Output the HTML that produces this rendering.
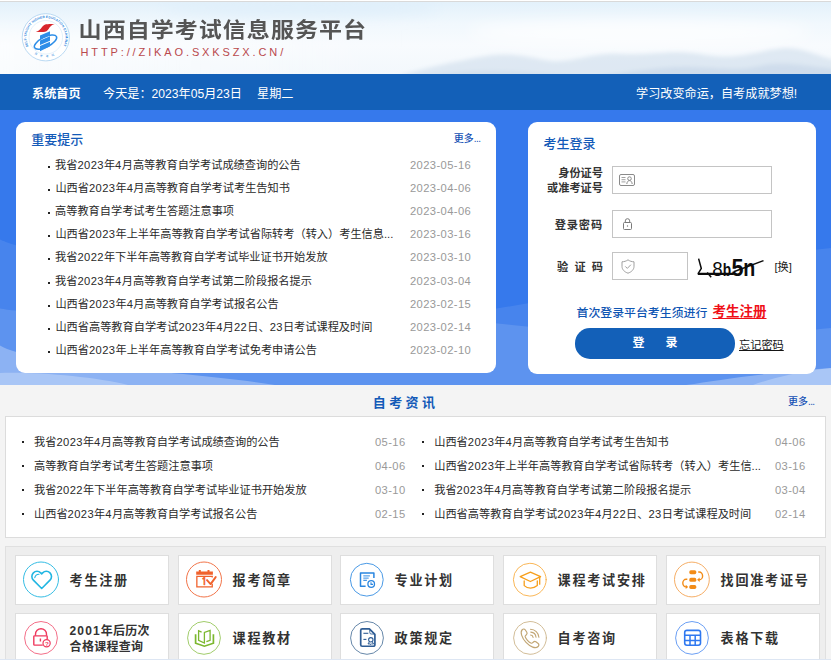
<!DOCTYPE html>
<html lang="zh-CN">
<head>
<meta charset="utf-8">
<title>山西自学考试信息服务平台</title>
<style>
*{margin:0;padding:0;box-sizing:border-box}
html,body{width:831px;height:660px;overflow:hidden;background:#f4f4f4}
body{position:relative;font-family:"Liberation Sans","Noto Sans CJK SC",sans-serif;color:#2a2a2a;font-size:11.2px}
.abs{position:absolute}
a{color:inherit;text-decoration:none}
#topline{left:0;top:0;width:831px;height:2px;background:linear-gradient(#fff 0,#fff 1px,#d9d9d9 1px,#d9d9d9 2px)}
#header{left:0;top:2px;width:831px;height:72px;overflow:hidden;background:#f7fbfe}
#title{left:78.6px;top:12.6px;font-size:23px;font-weight:bold;color:#555;letter-spacing:1.04px;line-height:30px;white-space:nowrap;transform:scaleY(.91);transform-origin:0 50%}
#url{left:80.5px;top:42.9px;font-size:11px;color:#b9494d;letter-spacing:2.88px;line-height:14px;white-space:nowrap}
#nav{left:0;top:74px;width:831px;height:36px;background:#1360b8;color:#fff;font-size:12.15px;line-height:35px;white-space:nowrap}
#nav span{position:absolute;top:2.5px}
#main{left:0;top:110px;width:831px;height:275px;background:#3679ec;overflow:hidden}
.card{background:#fff;border-radius:9px}
#notice{left:16px;top:122px;width:480px;height:251px}
#login{left:528px;top:122px;width:288px;height:252px}
.h{color:#135ab8;font-size:13px;font-weight:500;line-height:16px;white-space:nowrap}
.more{color:#1450b4;font-size:10px;line-height:12px;white-space:nowrap;font-weight:500}
.more u{text-decoration:none;letter-spacing:-.6px}
.li{position:absolute;left:0;width:100%;height:16px;line-height:16px;white-space:nowrap}
.li i{position:absolute;width:2px;height:2px;background:#222;top:9px}
.li span{position:absolute;top:0}
.li .d{color:#999}
.lab{left:0;width:75px;text-align:right;font-weight:bold;font-size:11.2px;color:#333;white-space:nowrap}
.inp{border:1px solid #c4c4c4;background:#fff}
#news{left:5px;top:416px;width:821px;height:122px;background:#fff;border:1px solid #dcdcdc}
#links{left:5px;top:546px;width:821px;height:120px;background:#eee;border:1px solid #e0e0e0}
.tile{position:absolute;width:154px;height:50px;background:#fff;border:1px solid #dedede}
.tile .ic{position:absolute;left:4.8px;top:3.3px}
.tile .tt{position:absolute;left:53.6px;top:16.3px;line-height:18px;font-size:13.1px;letter-spacing:1.75px;font-weight:bold;color:#333;white-space:nowrap}
.tile .tt.two{top:10.2px;line-height:15.400px;font-size:12px;letter-spacing:.300px}
.tile .tt b{letter-spacing:1.1px}
.li b{font-weight:normal;letter-spacing:.400px}
.li .d{letter-spacing:.400px}

</style>
</head>
<body>
<div id="topline" class="abs"></div>
<div id="header" class="abs">
  <svg class="abs" style="left:0;top:0" width="831" height="72" viewBox="0 0 831 72"><defs>
      <linearGradient id="sky" x1="0" y1="0" x2="0" y2="1"><stop offset="0" stop-color="#e3f1fb"/><stop offset=".3" stop-color="#f1f8fd"/><stop offset=".6" stop-color="#f8fbfe"/><stop offset="1" stop-color="#f3f8fc"/></linearGradient>
      <linearGradient id="fadeL" x1="0" y1="0" x2="1" y2="0"><stop offset="0" stop-color="#fff" stop-opacity=".55"/><stop offset=".5" stop-color="#fff" stop-opacity=".25"/><stop offset="1" stop-color="#fff" stop-opacity="0"/></linearGradient>
      <filter id="bl" x="-5%" y="-40%" width="110%" height="180%"><feGaussianBlur stdDeviation="2"/></filter>
      <filter id="bl2" x="-10%" y="-60%" width="120%" height="220%"><feGaussianBlur stdDeviation="7"/></filter>
    </defs>
    <rect width="831" height="72" fill="url(#sky)"/>
    <g filter="url(#bl2)"><rect x="-20" y="28" width="420" height="60" fill="url(#fadeL)"/><ellipse cx="640" cy="30" rx="170" ry="12" fill="#fff" fill-opacity=".7"/><ellipse cx="300" cy="6" rx="140" ry="8" fill="#ddeefa" fill-opacity=".8"/></g>
    <g filter="url(#bl)">
      <path d="M400 74C430 64 455 60 480 55S520 53 545 58 590 50 620 52 670 47 700 52 740 54 770 48 810 52 835 58V80H400z" fill="#d6e2ef" fill-opacity=".72"/>
      <path d="M600 74C630 70 660 64 690 65S740 69 760 64 800 63 835 67V80H600z" fill="#c6d6e8" fill-opacity=".6"/>
      <path d="M410 76C440 71 470 68 500 69S560 73 590 76z" fill="#cddbea" fill-opacity=".6"/>
    </g>
</svg>
  <svg class="abs" style="left:15px;top:6px" width="60" height="60" viewBox="0 0 60 60">
    <defs>
      <path id="arcT" d="M13.600 38.500A19.500 19.500 0 1 1 48.500 38"/>
      <path id="arcB" d="M19.500 45.800A19.800 19.800 0 0 0 42.300 45.600"/>
    </defs>
    <circle cx="30.800" cy="29.300" r="23.600" fill="#fff" stroke="#a9d0f0" stroke-width=".800"/>
    <circle cx="30.800" cy="29.300" r="16.800" fill="none" stroke="#c9e2f6" stroke-width=".500"/>
    <text font-family="Liberation Sans, sans-serif" font-size="3.300" font-weight="bold" fill="#2f86dc" letter-spacing=".100"><textPath href="#arcT">SELF-TAUGHT HIGHER EDUCATION EXAMINATIONS</textPath></text>
    <text font-family="Liberation Sans, Noto Sans CJK SC, sans-serif" font-size="2.800" fill="#2f86dc" letter-spacing="3.200"><textPath href="#arcB">自学考试</textPath></text>
    <path d="M20.800 23.900c3.500-.600 5.200-3.600 7.200-5.800 1.600-1.800 3.200-1.900 11.600-2-3.200.700-4.500 2.800-6 4.800-1.400 1.900-2.600 3-5.300 3z" fill="#d8262c"/>
    <ellipse cx="30.500" cy="34.100" rx="12.300" ry="5" transform="rotate(-27 30.500 34.100)" fill="none" stroke="#2e8ee8" stroke-width="1.500"/>
    <path d="M25 27.400l10-4.200v4.100l-10 4.200zM25 32.500l10-4.200v4.400l-10 4.200zM25 37.900l10-4.200v4.500l-10 5z" fill="#2e8ee8"/>
  </svg>

  <div id="title" class="abs">山西自学考试信息服务平台</div>
  <div id="url" class="abs">HTTP://ZIKAO.SXKSZX.CN/</div>
</div>
<div id="nav" class="abs">
  <span style="left:32px;font-weight:bold">系统首页</span>
  <span style="left:103px">今天是：2023年05月23日</span>
  <span style="left:257px">星期二</span>
  <span style="left:636px">学习改变命运，自考成就梦想!</span>
</div>
<div id="main" class="abs">
  <svg class="abs" style="left:0;top:-1px" width="831" height="276" viewBox="0 0 831 276"><path d="M0 130.500C22 142 300 215 420 208S720 150 831 139V276H0z" fill="#fff" fill-opacity=".085"/>
    <path d="M0 199.500C60 211 330 196 512 216S760 226 831 219V276H0z" fill="#fff" fill-opacity=".120"/>
    <path d="M0 236.500C34 257 190 262 275 276H0z" fill="#fff" fill-opacity=".290"/>
    <path d="M686 276C720 271 760 264 831 259V276z" fill="#fff" fill-opacity=".290"/>
    <path d="M0 264C40 263 95 268 128 276H0z" fill="#fff" fill-opacity=".260"/>
    <path d="M753 276C770 270 795 263 831 259V276z" fill="#fff" fill-opacity=".260"/></svg>
</div>
<div id="notice" class="abs card">
  <div class="abs h" style="left:15.2px;top:10.3px">重要提示</div>
  <div class="abs more" style="left:437.8px;top:10.8px">更多<u>...</u></div>
  <div class="li" style="top:35.0px"><i style="left:32px"></i><span style="left:39px">我省<b>2023</b>年<b>4</b>月高等教育自学考试成绩查询的公告</span><span class="d" style="left:394px">2023-05-16</span></div>
  <div class="li" style="top:58.1px"><i style="left:32px"></i><span style="left:39.4px">山西省<b>2023</b>年<b>4</b>月高等教育自学考试考生告知书</span><span class="d" style="left:394px">2023-04-06</span></div>
  <div class="li" style="top:81.2px"><i style="left:32px"></i><span style="left:39px">高等教育自学考试考生答题注意事项</span><span class="d" style="left:394px">2023-04-06</span></div>
  <div class="li" style="top:104.3px"><i style="left:32px"></i><span style="left:39.4px">山西省<b>2023</b>年上半年高等教育自学考试省际转考（转入）考生信息...</span><span class="d" style="left:394px">2023-03-16</span></div>
  <div class="li" style="top:127.4px"><i style="left:32px"></i><span style="left:39px">我省<b>2022</b>年下半年高等教育自学考试毕业证书开始发放</span><span class="d" style="left:394px">2023-03-10</span></div>
  <div class="li" style="top:150.5px"><i style="left:32px"></i><span style="left:39px">我省<b>2023</b>年<b>4</b>月高等教育自学考试第二阶段报名提示</span><span class="d" style="left:394px">2023-03-04</span></div>
  <div class="li" style="top:173.6px"><i style="left:32px"></i><span style="left:39.4px">山西省<b>2023</b>年<b>4</b>月高等教育自学考试报名公告</span><span class="d" style="left:394px">2023-02-15</span></div>
  <div class="li" style="top:196.7px"><i style="left:32px"></i><span style="left:39.4px">山西省高等教育自学考试<b>2023</b>年<b>4</b>月<b>22</b>日、<b>23</b>日考试课程及时间</span><span class="d" style="left:394px">2023-02-14</span></div>
  <div class="li" style="top:219.8px"><i style="left:32px"></i><span style="left:39.4px">山西省<b>2023</b>年上半年高等教育自学考试免考申请公告</span><span class="d" style="left:394px">2023-02-10</span></div>
</div>
<div id="login" class="abs card">
  <div class="abs h" style="left:15.5px;top:14.3px">考生登录</div>
  <div class="abs lab" style="top:43.7px;line-height:15.8px">身份证号<br>或准考证号</div>
  <div class="abs inp" style="left:84px;top:44px;width:160px;height:28px"></div>
  <svg class="abs" style="left:91px;top:52px" width="16" height="12" viewBox="0 0 16 12" fill="none" stroke="#8a8a8a" stroke-width="1"><rect x=".5" y=".5" width="15" height="11" rx="1.5"/><path d="M2.5 3.5h4M2.5 5.7h4M2.5 7.9h4" stroke-width=".8"/><circle cx="10.5" cy="4.6" r="1.8"/><path d="M7.8 10c.3-2.4 1.4-3.4 2.7-3.4s2.4 1 2.7 3.4"/></svg>
  <div class="abs lab" style="top:94.5px;line-height:16px;letter-spacing:.9px">登录密码</div>
  <div class="abs inp" style="left:84px;top:88px;width:160px;height:28px"></div>
  <svg class="abs" style="left:95px;top:96px" width="9" height="12" viewBox="0 0 9 12" fill="none" stroke="#7a7a7a" stroke-width="1"><rect x=".5" y="4.5" width="8" height="7" rx="1"/><path d="M2.3 4.5V2.9a2.2 2.2 0 0 1 4.4 0v1.6"/><circle cx="4.5" cy="8" r=".7" fill="#7a7a7a" stroke="none"/></svg>
  <div class="abs lab" style="top:137px;line-height:16px;word-spacing:0">验<span style="display:inline-block;width:6.2px"></span>证<span style="display:inline-block;width:6.2px"></span>码</div>
  <div class="abs inp" style="left:84px;top:130px;width:76px;height:28px"></div>
  <svg class="abs" style="left:92.5px;top:137px" width="14" height="15" viewBox="0 0 14 15" fill="none" stroke="#a0a0a0" stroke-width="1"><path d="M7 .8C5.2 2.2 3.2 2.7 1 2.8v4.6c0 3.300 2.600 5.600 6 6.800 3.400-1.200 6-3.500 6-6.800V2.800C10.800 2.700 8.800 2.200 7 .8z"/><path d="M4.300 7.400l2 2 3.600-3.700"/></svg>
  <svg class="abs" style="left:168px;top:132px" width="72" height="28" viewBox="0 0 72 28" font-family="Liberation Sans, sans-serif" fill="#0c0c0c">
    <text x="16.300" y="21.800" font-size="20" textLength="10.400" lengthAdjust="spacingAndGlyphs">8</text>
    <text x="26.800" y="21.800" font-size="18" font-weight="bold" textLength="8.400" lengthAdjust="spacingAndGlyphs">b</text>
    <text x="35.400" y="21.800" font-size="24" font-weight="bold" textLength="12" lengthAdjust="spacingAndGlyphs">5</text>
    <text x="47.300" y="21.800" font-size="23" font-weight="bold" textLength="12" lengthAdjust="spacingAndGlyphs">n</text>
    <path d="M2.600 4.600l2.700 9.900-3.300 5.300M37.700 17.800l29.800-11.200M11.200 18.500l4 4.700" fill="none" stroke="#0c0c0c" stroke-width="1.500"/>
    <path d="M1.800 19.900h36" fill="none" stroke="#0c0c0c" stroke-width="2.200"/>
  </svg>
  <div class="abs" style="left:246.500px;top:137px;line-height:16px;font-size:11.200px;color:#222">[换]</div>
  <div class="abs" style="left:48.500px;top:183px;line-height:16px;font-size:11.900px;color:#0f55b3;white-space:nowrap;font-weight:500">首次登录平台考生须进行</div>
  <div class="abs" style="left:184.500px;top:181px;line-height:18px;font-size:13.500px;color:#f00f17;white-space:nowrap;font-weight:bold;text-decoration:underline;text-underline-offset:2px">考生注册</div>
  <div class="abs" style="left:47px;top:206.300px;width:160px;height:30.400px;border-radius:15px;background:#1360b8;color:#fff;font-weight:bold;font-size:12px;line-height:30px;text-align:center">登<span style="display:inline-block;width:21px"></span>录</div>
  <div class="abs" style="left:211px;top:214.500px;line-height:16px;font-size:11.200px;color:#151515;white-space:nowrap;text-decoration:underline;text-underline-offset:.8px">忘记密码</div>

</div>
<div class="abs h" style="left:372.8px;top:394.8px;letter-spacing:3.4px;font-weight:bold">自考资讯</div>
<div class="abs more" style="left:788px;top:395.8px">更多<u>...</u></div>
<div id="news" class="abs">
<div class="li" style="top:17px"><i style="left:16px;top:6.7px"></i><span style="left:28px">我省<b>2023</b>年<b>4</b>月高等教育自学考试成绩查询的公告</span><span class="d" style="left:369px">05-16</span></div>
<div class="li" style="top:17px"><i style="left:416px;top:6.7px"></i><span style="left:428.2px">山西省<b>2023</b>年<b>4</b>月高等教育自学考试考生告知书</span><span class="d" style="left:769px">04-06</span></div>
<div class="li" style="top:41px"><i style="left:16px;top:6.7px"></i><span style="left:28px">高等教育自学考试考生答题注意事项</span><span class="d" style="left:369px">04-06</span></div>
<div class="li" style="top:41px"><i style="left:416px;top:6.7px"></i><span style="left:428.2px">山西省<b>2023</b>年上半年高等教育自学考试省际转考（转入）考生信...</span><span class="d" style="left:769px">03-16</span></div>
<div class="li" style="top:65px"><i style="left:16px;top:6.7px"></i><span style="left:28px">我省<b>2022</b>年下半年高等教育自学考试毕业证书开始发放</span><span class="d" style="left:369px">03-10</span></div>
<div class="li" style="top:65px"><i style="left:416px;top:6.7px"></i><span style="left:428.2px">我省<b>2023</b>年<b>4</b>月高等教育自学考试第二阶段报名提示</span><span class="d" style="left:769px">03-04</span></div>
<div class="li" style="top:89px"><i style="left:16px;top:6.7px"></i><span style="left:28px">山西省<b>2023</b>年<b>4</b>月高等教育自学考试报名公告</span><span class="d" style="left:369px">02-15</span></div>
<div class="li" style="top:89px"><i style="left:416px;top:6.7px"></i><span style="left:428.2px">山西省高等教育自学考试<b>2023</b>年<b>4</b>月<b>22</b>日、<b>23</b>日考试课程及时间</span><span class="d" style="left:769px">02-14</span></div>
</div>
<div id="links" class="abs">
<div class="tile" style="left:9px;top:8px"><svg class="ic" width="40" height="40" viewBox="0 0 40 40" fill="none" stroke="#22b6e2" stroke-linecap="round" stroke-linejoin="round"><circle cx="20" cy="20.500" r="17.500" stroke-width="1" stroke="#35bde4"/><path transform="translate(9.400 9.500) scale(.94)" d="M20.840 4.610a5.500 5.500 0 0 0-7.780 0L12 5.670l-1.060-1.060a5.500 5.500 0 0 0-7.780 7.780l1.060 1.060L12 21.230l7.780-7.780 1.060-1.060a5.500 5.500 0 0 0 0-7.780z" stroke-width="1.700"/><path d="M13.800 18.700a4.300 4.300 0 0 1 4.200-3.500" stroke-width="1.100"/></svg><div class="tt">考生注册</div></div>
<div class="tile" style="left:172px;top:8px"><svg class="ic" width="40" height="40" viewBox="0 0 40 40" fill="none" stroke="#f0622d"><circle cx="20" cy="20.500" r="17.500" stroke-width="1" stroke="#f2754a"/><path d="M12.200 12.400h2.600v-1.400h2v1.400h6.700v-1.400h2v1.400h3.400v3.300H12.200z" fill="#f0622d" stroke="none"/><path d="M28.250 24.800v3.100H12.850V17.400h15.400v1" stroke-width="1.300"/><text x="17.200" y="25.600" font-family="NanumGothic, sans-serif" font-size="9.800" font-weight="bold" fill="#f0622d" stroke="#f0622d" stroke-width=".5">1</text><path d="M23 21.100l3.600 4 5.100-7" stroke-width="1.900" stroke-linecap="round" stroke-linejoin="round"/></svg><div class="tt">报考简章</div></div>
<div class="tile" style="left:334px;top:8px"><svg class="ic" style="left:5.8px" width="40" height="40" viewBox="0 0 40 40" fill="none" stroke="#2a86e0"><circle cx="19.800" cy="20.700" r="16.400" stroke-width="1" stroke="#4a9ae6"/><path d="M18.600 27.300h-5.100V13.900h13.400v5.200" stroke-width="1.500" stroke-linejoin="round"/><path d="M16.300 16.800h6.600M16.300 19.100h5.400" stroke-width="1.300" stroke="#5aa3ea"/><path d="M16.300 21.300h3.600" stroke-width="1.100"/><circle cx="24.200" cy="25" r="3.300" stroke-width="1.300"/><path d="M24 23.300v2.100h2" stroke-width="1.100"/></svg><div class="tt">专业计划</div></div>
<div class="tile" style="left:497px;top:8px"><svg class="ic" style="left:5.8px" width="40" height="40" viewBox="0 0 40 40" fill="none" stroke="#f79f1c" stroke-linejoin="round" stroke-linecap="round"><circle cx="19.800" cy="20.700" r="16.400" stroke-width=".900" stroke="#f8ae44"/><path d="M10.200 17.600l10.200-4.400 10.200 4.400-10.200 4.900z" stroke-width="1.300"/><path d="M29.700 18.200v7" stroke-width="1.300"/><path d="M14.200 22v4.600c1.800 1.700 4 2.500 6.300 2.500s4.800-.8 6.800-2.500V22" stroke-width="1.300"/></svg><div class="tt">课程考试安排</div></div>
<div class="tile" style="left:660px;top:8px"><svg class="ic" style="left:5.8px" width="40" height="40" viewBox="0 0 40 40" fill="none" stroke="#f28c18"><circle cx="18.900" cy="20.500" r="17.400" stroke-width=".900" stroke="#f4a453"/><g fill="#f28c18" stroke="none"><rect x="16.300" y="11.200" width="7" height="4" rx="1.600"/><rect x="16.300" y="18.800" width="7" height="4" rx="1.600"/><rect x="16.300" y="25.900" width="7" height="4" rx="1.600"/><path d="M24.100 20.800l2.500-2.200v4.400z"/><path d="M15.200 27.900l-2.500-2.200v4.400z"/></g><path d="M25.200 13h1a3.400 3.900 0 0 1 0 7.800h-.4" stroke-width="1.400"/><path d="M14.300 20.300h-1.200a3.300 3.800 0 0 0 0 7.600h.6" stroke-width="1.400"/></svg><div class="tt">找回准考证号</div></div>
<div class="tile" style="left:9px;top:66px"><svg class="ic" width="40" height="40" viewBox="0 0 40 40" fill="none" stroke="#ef3a5f"><circle cx="20" cy="20.900" r="16.400" stroke-width=".900" stroke="#f25d7b"/><g transform="translate(0 .8)"><path d="M21.800 27.300h-8.300a.7.700 0 0 1-.7-.7v-7.800a.7.700 0 0 1 .7-.7h12a.7.700 0 0 1 .7.700v2.600" stroke-width="1.400"/><path d="M14.500 17.900v-1.500a5.500 5.500 0 0 1 11 0v1.500" stroke-width="1.400"/><path d="M19.400 20.700v3" stroke-width="1.400"/><circle cx="25.600" cy="25.500" r="3.600" stroke-width="1.200" fill="#fff"/><text x="23.900" y="27.800" font-family="Liberation Sans, sans-serif" font-size="6.200" font-weight="bold" fill="#ef3a5f" stroke="none">?</text></g></svg><div class="tt two"><b>2001</b>年后历次<br>合格课程查询</div></div>
<div class="tile" style="left:172px;top:66px"><svg class="ic" width="40" height="40" viewBox="0 0 40 40" fill="none" stroke="#7cb82f"><circle cx="20" cy="20.900" r="16.400" stroke-width=".900" stroke="#96c65a"/><path d="M11.600 17.200v9l8.800 3 9-3v-9" stroke-width="1.700"/><path d="M17.600 15.100l-3-1.400v9.600l5.800 2.700V15.400l5.700-1.900v9.800l-3.700 1.300" stroke-width="1.300"/></svg><div class="tt">课程教材</div></div>
<div class="tile" style="left:334px;top:66px"><svg class="ic" style="left:5.8px" width="40" height="40" viewBox="0 0 40 40" fill="none" stroke="#2f5d95"><circle cx="20" cy="20.900" r="16.400" stroke-width=".900" stroke="#55799f"/><path d="M22.400 11.950h-7.200a1.500 1.500 0 0 0-1.500 1.500v14.300a1.500 1.500 0 0 0 1.500 1.500h11.200a1.500 1.500 0 0 0 1.500-1.500V17.400z" stroke-width="1.700" stroke-linejoin="round"/><path d="M22.800 12.400v3.200a1.400 1.400 0 0 0 1.400 1.400h3.200" stroke-width=".9"/><path d="M16.400 16.300h4.900" stroke-width="1.100"/><path d="M16.400 22.400h3" stroke-width="1.100"/><circle cx="23.800" cy="22.800" r="2.200" stroke-width="1.100"/><path d="M22.500 24.600l-1.500 2.300h2.300l.5 1M25.100 24.600l1.500 2.300h-2.300" stroke-width="1" stroke-linejoin="round"/></svg><div class="tt">政策规定</div></div>
<div class="tile" style="left:497px;top:66px"><svg class="ic" style="left:5.8px" width="40" height="40" viewBox="0 0 40 40" fill="none" stroke="#c2a674" stroke-linecap="round" stroke-linejoin="round"><circle cx="20" cy="20.900" r="16.400" stroke-width=".900" stroke="#cdb68c"/><path transform="translate(-.8 .6) scale(.985)" d="M13.200 12.300c.9-.9 2.300-1.100 3 0l1.700 2.600c.6 1 .2 1.900-.6 2.600-.6.500-1.300 1-1.100 1.900.5 2 3.600 5.600 6.200 6.600.9.300 1.400-.4 2-1 .8-.8 1.700-1.100 2.700-.4l2.300 1.700c1 .8.900 2.100 0 3-1.400 1.400-3.600 1.400-5.500.7-4.700-1.800-9.700-7-11.300-12.200-.6-2-.700-4.200.6-5.500z" stroke-width="1.200"/><path transform="translate(.3 .5)" d="M20.300 17.500a2.800 2.800 0 0 1 2.500 2.400M20.500 14.600a5.700 5.700 0 0 1 5.200 5.100M20.200 11.700a8.600 8.600 0 0 1 8.400 8" stroke-width="1.100"/></svg><div class="tt">自考咨询</div></div>
<div class="tile" style="left:660px;top:66px"><svg class="ic" style="left:5.8px" width="40" height="40" viewBox="0 0 40 40" fill="none" stroke="#2f78f0"><circle cx="19" cy="20.900" r="16.400" stroke-width=".900" stroke="#5a94f3"/><rect x="11.700" y="13.400" width="15.800" height="14.900" rx="2.200" stroke-width="1.600"/><path d="M11.700 18.200h15.800M11.700 23.600h15.800M17 18.200v10.100M22.200 18.200v10.100" stroke-width="1.500"/></svg><div class="tt">表格下载</div></div>
</div>
<div class="abs" style="left:0;top:659px;width:831px;height:1px;background:#dde6f3"></div>
</body>
</html>
